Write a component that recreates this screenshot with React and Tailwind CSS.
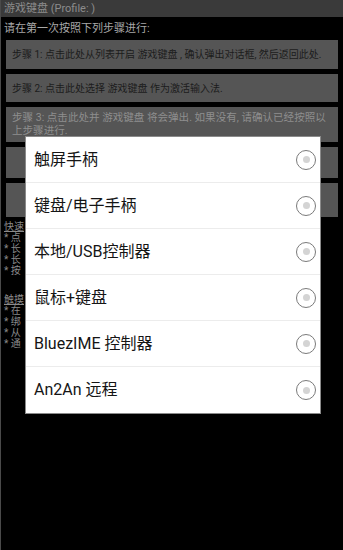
import React from "react";

const steps = [
  { text: "步骤 1: 点击此处从列表开启 游戏键盘 , 确认弹出对话框, 然后返回此处.", dim: false, h: "h-[29px]" },
  { text: "步骤 2: 点击此处选择 游戏键盘 作为激活输入法.", dim: false, h: "h-[28px]" },
  { text: "步骤 3: 点击此处并 游戏键盘 将会弹出. 如果没有, 请确认已经按照以上步骤进行.", dim: true, h: "h-[35px]" },
  { text: "配置", dim: false, h: "h-[31px]", center: true },
  { text: "测试", dim: false, h: "h-[34px]", center: true },
];

const options = [
  "触屏手柄",
  "键盘/电子手柄",
  "本地/USB控制器",
  "鼠标+键盘",
  "BluezIME 控制器",
  "An2An 远程",
];

const Radio = () => (
  <span className="w-[20px] h-[20px] rounded-full border-[1.5px] border-[#7a7a7a] flex items-center justify-center">
    <span className="w-[7px] h-[7px] rounded-full bg-[#d4d4d4]" />
  </span>
);

export default function App() {
  return (
    <div
      className="relative w-[343px] h-[550px] bg-black overflow-hidden border-l border-[#4a4a4a]"
      style={{ fontFamily: '"Roboto", "Noto Sans CJK SC", sans-serif' }}
    >
      {/* title bar */}
      <div className="h-[17px] bg-[#3a3a3a] text-[#8c8c8c] text-[11px] leading-[17px] px-[3px]">
        游戏键盘 (Profile: )
      </div>

      <div className="text-[11px] leading-[16px] text-[#a8a8a8] px-[3px] mt-[4px]">
        请在第一次按照下列步骤进行:
      </div>

      {/* steps */}
      <div className="flex flex-col gap-[5px] mx-[5px] mt-[3px]">
        {steps.map((s, i) => (
          <div
            key={i}
            className={`${s.h} bg-[#555555] px-[6px] flex leading-[13px] ${s.center ? "items-center justify-center" : ""} ${s.dim ? "text-[10.55px] text-[#8e8e8e] items-start pt-[4px]" : "text-[10px] items-center text-[#1c1c1c]"}`}
          >
            {s.text}
          </div>
        ))}
      </div>

      {/* help text behind dialog */}
      <div className="px-[3px] mt-[4px] text-[10px] leading-[11px] text-[#8a8a8a]">
        <div className="underline">快速</div>
        <div>* 点</div>
        <div>* 长</div>
        <div>* 长</div>
        <div>* 按</div>
        <div className="h-[18px]" />
        <div className="underline">触摸</div>
        <div>* 在</div>
        <div>* 绑</div>
        <div>* 从</div>
        <div>* 通</div>
      </div>

      {/* dialog */}
      <div className="absolute left-[24px] top-[136px] w-[296px] bg-white border border-[#8a8a8a]">
        {options.map((o, i) => (
          <div
            key={o}
            className={`h-[46px] flex items-center justify-between pl-[8px] pr-[4px] ${i < options.length - 1 ? "border-b border-[#ececec]" : ""}`}
          >
            <span className="text-[16px] text-[#151515]">{o}</span>
            <Radio />
          </div>
        ))}
      </div>
    </div>
  );
}
